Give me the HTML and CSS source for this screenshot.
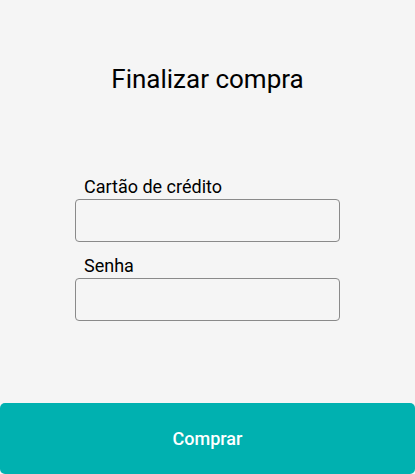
FILE: index.html
```html
<!DOCTYPE html>
<html lang="pt">
<head>
<meta charset="utf-8">
<title>Finalizar compra</title>
<link rel="stylesheet" href="styles.css">
</head>
<body>
<main class="screen">
  <h1 class="title">Finalizar compra</h1>
  <form class="form">
    <label class="label" for="card">Cartão de crédito</label>
    <input class="input" id="card" type="text">
    <label class="label label-second" for="pass">Senha</label>
    <input class="input" id="pass" type="password">
  </form>
  <button class="buy" type="button">Comprar</button>
</main>
</body>
</html>
```
FILE: styles.css
```css
html, body {
  margin: 0;
  padding: 0;
  background: #f5f5f5;
}
.screen {
  height: 474px;
  display: flex;
  flex-direction: column;
  font-family: Roboto, "Noto Sans", sans-serif;
  color: #000;
}
.title {
  margin: 64px 0 0;
  font-size: 26px;
  line-height: 30px;
  font-weight: 400;
  text-align: center;
}
.form {
  width: 265px;
  margin: 82px auto 0;
  display: flex;
  flex-direction: column;
}
.label {
  font-size: 18px;
  line-height: 21px;
  padding-left: 9px;
  margin-bottom: 2px;
}
.label-second {
  margin-top: 13px;
}
.input {
  box-sizing: border-box;
  height: 43px;
  width: 100%;
  margin: 0;
  border: 1px solid #8a8a8a;
  border-radius: 4px;
  background: #f5f5f5;
  font-family: inherit;
  font-size: 16px;
  padding: 0 10px;
}
.buy {
  margin-top: auto;
  height: 71px;
  width: 100%;
  border: 0;
  border-radius: 5px;
  background: #00b1b0;
  color: #fff;
  font-family: Roboto, "Noto Sans", sans-serif;
  font-size: 18px;
  font-weight: 500;
}
```
